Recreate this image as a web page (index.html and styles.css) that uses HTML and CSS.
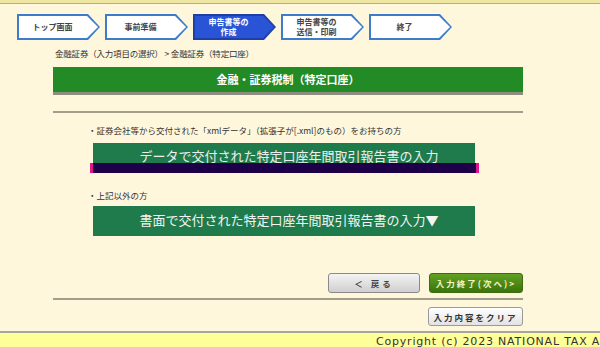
FILE: index.html
```html
<!DOCTYPE html>
<html lang="ja">
<head>
    <meta charset="UTF-8">
    <meta name="viewport" content="width=device-width, initial-scale=1.0">
    <title>金融・証券税制（特定口座）</title>
    <link rel="stylesheet" href="styles.css">
</head>
<body>
    <div class="topbar"></div>

    <!-- 進行ステップ -->
    <ol class="steps">
        <li class="step"><span class="step-in">トップ画面</span></li>
        <li class="step"><span class="step-in">事前準備</span></li>
        <li class="step active"><span class="step-in">申告書等の<br>作成</span></li>
        <li class="step"><span class="step-in">申告書等の<br>送信・印刷</span></li>
        <li class="step"><span class="step-in">終了</span></li>
    </ol>

    <main class="page">
        <p class="crumbs">金融証券（入力項目の選択）&nbsp;&gt;&nbsp;金融証券（特定口座）</p>

        <h1 class="title">金融・証券税制（特定口座）</h1>
        <hr class="rule">

        <section class="choice">
            <p class="note">・証券会社等から交付された「xmlデータ」（拡張子が[.xml]のもの）をお持ちの方</p>
            <div class="big-btn data-btn">
                データで交付された特定口座年間取引報告書の入力
                <span class="focus-bar"></span>
            </div>

            <p class="note note-2">・上記以外の方</p>
            <div class="big-btn paper-btn">書面で交付された特定口座年間取引報告書の入力▼</div>
        </section>

        <div class="nav-row">
            <a href="#" class="btn btn-back">＜ 戻る</a>
            <a href="#" class="btn btn-next">入力終了(次へ)&gt;</a>
        </div>
        <hr class="rule rule-2">
        <div class="clear-row">
            <a href="#" class="btn btn-clear">入力内容をクリア</a>
        </div>
    </main>

    <footer class="footer">
        <p>Copyright (c) 2023 NATIONAL TAX AGENCY. All Rights Reserved.</p>
    </footer>
</body>
</html>
```

FILE: styles.css
```css
body {
    margin: 0;
    padding: 0;
    background-color: #fff7dc;
    color: #333;
    font-family: "Noto Sans CJK JP", "DejaVu Sans", sans-serif;
    overflow: hidden;
}
p {
    margin: 0;
}
.topbar {
    height: 3px;
    background-color: #efe6a4;
    border-bottom: 1px solid #b9b07a;
}

/* steps */
.steps {
    display: flex;
    gap: 5px;
    list-style: none;
    margin: 10px 0 0 17px;
    padding: 0;
}
.step {
    width: 83px;
    height: 26px;
    padding: 2px;
    box-sizing: border-box;
    background-color: #3d7ccc;
    clip-path: polygon(0 0, 71px 0, 100% 50%, 71px 100%, 0 100%);
}
.step-in {
    display: flex;
    align-items: center;
    justify-content: center;
    height: 100%;
    padding-right: 12px;
    background-color: #fff;
    clip-path: polygon(0 0, 68px 0, 100% 50%, 68px 100%, 0 100%);
    font-size: 8px;
    font-weight: bold;
    line-height: 10px;
    text-align: center;
    color: #444;
}
.step.active {
    background-color: #1f3fa8;
}
.step.active .step-in {
    background-color: #2a54d6;
    color: #fff;
}

/* main */
.page {
    margin-left: 53px;
    width: 470px;
}
.crumbs {
    margin-top: 7px;
    padding-left: 2px;
    font-size: 8.5px;
    line-height: 12px;
    color: #333;
    letter-spacing: -0.2px;
}
.title {
    margin: 8px 0 0;
    height: 25px;
    line-height: 24px;
    background-color: #238b26;
    border-bottom: 3px solid #8f8c80;
    color: #fff;
    font-size: 11px;
    font-weight: bold;
    text-align: center;
}
.rule {
    margin: 16px 0 0;
    height: 2px;
    border: none;
    background-color: #a39d8c;
}
.choice {
    padding-left: 35px;
}
.note {
    margin-top: 11px;
    font-size: 8.5px;
    line-height: 12px;
}
.note-2 {
    margin-top: 16px;
}
.big-btn {
    position: relative;
    width: 382px;
    height: 30px;
    margin: 7px 0 0 5px;
    background-color: #1f7b4b;
    color: #eee;
    font-size: 13px;
    line-height: 28px;
    text-align: center;
    padding-left: 10px;
    box-sizing: border-box;
}
.data-btn {
    line-height: 26px;
}
.paper-btn {
    margin-top: 5px;
    color: #f4f4f4;
}
.focus-bar {
    position: absolute;
    left: -3px;
    right: -4px;
    bottom: 0;
    height: 10px;
    background-color: #1d0048;
    border-left: 3px solid #e0148c;
    border-right: 3px solid #e0148c;
}

/* buttons */
.nav-row {
    display: flex;
    justify-content: flex-end;
    gap: 9px;
    margin-top: 37px;
}
.btn {
    display: flex;
    align-items: center;
    justify-content: center;
    height: 20px;
    box-sizing: border-box;
    border-radius: 3px;
    font-size: 8.5px;
    font-weight: bold;
    letter-spacing: 2px;
    text-decoration: none;
}
.btn-back {
    width: 92px;
    border: 1px solid #8a8a8a;
    background: linear-gradient(#f4f4f4, #cfcfcf);
    color: #444;
    letter-spacing: 3px;
}
.btn-next {
    width: 94px;
    border: 1px solid #3f6c10;
    background: linear-gradient(#62a124, #3b7409);
    color: #f4f4c8;
    letter-spacing: 2px;
}
.rule-2 {
    margin-top: 5px;
}
.clear-row {
    display: flex;
    justify-content: flex-end;
    margin-top: 7px;
}
.btn-clear {
    width: 95px;
    height: 19px;
    border: 1px solid #9a9a9a;
    background: linear-gradient(#fff, #e2e2e2);
    color: #333;
}

/* footer */
.footer {
    margin-top: 5px;
    height: 20px;
    background-color: #ffff99;
    border-top: 2px solid #a6a6a0;
}
.footer p {
    margin-left: 376px;
    padding-top: 2px;
    font-family: "DejaVu Sans", Verdana, sans-serif;
    font-size: 11px;
    letter-spacing: 0.8px;
    line-height: 13px;
    white-space: nowrap;
    color: #333;
}
```
